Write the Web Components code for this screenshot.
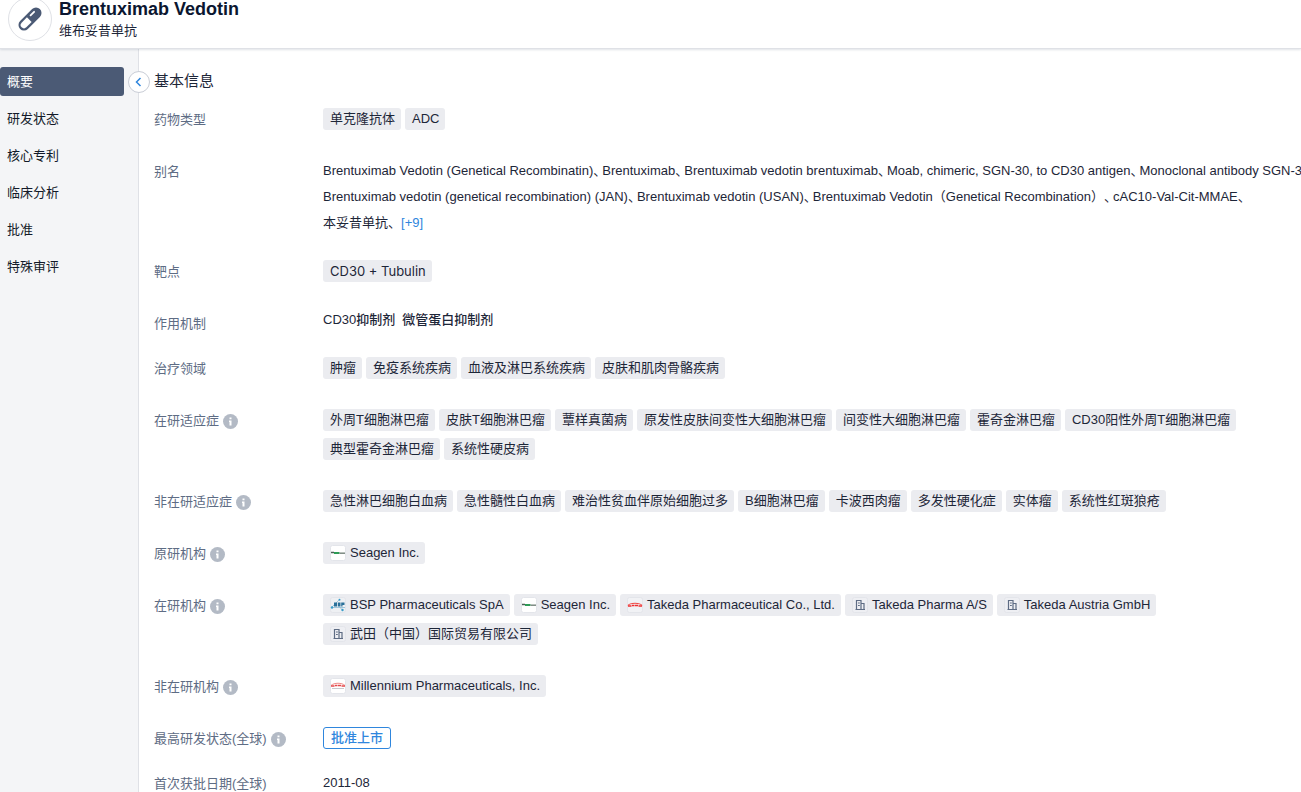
<!DOCTYPE html>
<html lang="zh-CN">
<head>
<meta charset="utf-8">
<title>Brentuximab Vedotin</title>
<style>
    body {
        margin: 0;
        height: 100vh;
        overflow: hidden;
        background: #fff;
        color: #1d2638;
        font: 13px/22px "Liberation Sans", "Noto Sans CJK SC", sans-serif;
        text-spacing-trim: space-all;
        --color-border: #dfe1e6;
        --color-tag: #ebecf0;
        --color-slate: #4b5a75;
        --color-label: #5e6c84;
        --color-primary: #2f86dd;
    }
</style>
</head>
<body>
<drug-page>
    <drug-header slot="header">
        Brentuximab Vedotin
        <span slot="subtitle">维布妥昔单抗</span>
    </drug-header>
    <side-nav slot="nav">
        <nav-item active>概要</nav-item>
        <nav-item>研发状态</nav-item>
        <nav-item>核心专利</nav-item>
        <nav-item>临床分析</nav-item>
        <nav-item>批准</nav-item>
        <nav-item>特殊审评</nav-item>
    </side-nav>
    <info-section heading="基本信息">
        <info-row label="药物类型">
            <info-tag>单克隆抗体</info-tag>
            <info-tag>ADC</info-tag>
        </info-row>
        <info-row label="别名">
            <alias-list>
                <alias-name>Brentuximab Vedotin (Genetical Recombinatin)、</alias-name>
                <alias-name>Brentuximab、</alias-name>
                <alias-name>Brentuximab vedotin brentuximab、</alias-name>
                <alias-name>Moab, chimeric, SGN-30, to CD30 antigen、</alias-name>
                <alias-name>Monoclonal antibody SGN-3</alias-name>
            </alias-list>
            <alias-list>
                <alias-name>Brentuximab vedotin (genetical recombination) (JAN)、</alias-name>
                <alias-name>Brentuximab vedotin (USAN)、</alias-name>
                <alias-name>Brentuximab Vedotin（Genetical Recombination）、</alias-name>
                <alias-name>cAC10-Val-Cit-MMAE、</alias-name>
            </alias-list>
            <alias-list more="[+9]">
                <alias-name>本妥昔单抗、</alias-name>
            </alias-list>
        </info-row>
        <info-row label="靶点">
            <info-tag strong>CD30 + Tubulin</info-tag>
        </info-row>
        <info-row label="作用机制" tight>
            <plain-value strong>CD30抑制剂</plain-value>
            <plain-value strong>微管蛋白抑制剂</plain-value>
        </info-row>
        <info-row label="治疗领域">
            <info-tag>肿瘤</info-tag>
            <info-tag>免疫系统疾病</info-tag>
            <info-tag>血液及淋巴系统疾病</info-tag>
            <info-tag>皮肤和肌肉骨骼疾病</info-tag>
        </info-row>
        <info-row label="在研适应症" hint>
            <info-tag>外周T细胞淋巴瘤</info-tag>
            <info-tag>皮肤T细胞淋巴瘤</info-tag>
            <info-tag>蕈样真菌病</info-tag>
            <info-tag>原发性皮肤间变性大细胞淋巴瘤</info-tag>
            <info-tag>间变性大细胞淋巴瘤</info-tag>
            <info-tag>霍奇金淋巴瘤</info-tag>
            <info-tag>CD30阳性外周T细胞淋巴瘤</info-tag>
            <info-tag>典型霍奇金淋巴瘤</info-tag>
            <info-tag>系统性硬皮病</info-tag>
        </info-row>
        <info-row label="非在研适应症" hint>
            <info-tag>急性淋巴细胞白血病</info-tag>
            <info-tag>急性髓性白血病</info-tag>
            <info-tag>难治性贫血伴原始细胞过多</info-tag>
            <info-tag>B细胞淋巴瘤</info-tag>
            <info-tag>卡波西肉瘤</info-tag>
            <info-tag>多发性硬化症</info-tag>
            <info-tag>实体瘤</info-tag>
            <info-tag>系统性红斑狼疮</info-tag>
        </info-row>
        <info-row label="原研机构" hint>
            <info-tag logo="seagen">Seagen Inc.</info-tag>
        </info-row>
        <info-row label="在研机构" hint>
            <info-tag logo="bsp">BSP Pharmaceuticals SpA</info-tag>
            <info-tag logo="seagen">Seagen Inc.</info-tag>
            <info-tag logo="takeda">Takeda Pharmaceutical Co., Ltd.</info-tag>
            <info-tag logo="building">Takeda Pharma A/S</info-tag>
            <info-tag logo="building">Takeda Austria GmbH</info-tag>
            <info-tag logo="building">武田（中国）国际贸易有限公司</info-tag>
        </info-row>
        <info-row label="非在研机构" hint>
            <info-tag logo="millennium">Millennium Pharmaceuticals, Inc.</info-tag>
        </info-row>
        <info-row label="最高研发状态(全球)" hint tight>
            <status-badge>批准上市</status-badge>
        </info-row>
        <info-row label="首次获批日期(全球)">
            <plain-value>2011-08</plain-value>
        </info-row>
    </info-section>
</drug-page>

<script>
const logos = {
    seagen: `
        <rect x=".5" y=".5" width="15" height="15" rx="2" fill="#fff" stroke="#e3e5ea"/>
        <path d="M1 7.500h3" stroke="#4a5f55" stroke-width="1.500"/>
        <path d="M4 8h5.500" stroke="#2e9c56" stroke-width="2"/>
        <path d="M9.500 8.200h5.500" stroke="#7c8a82" stroke-width="1.500"/>`,
    bsp: `
        <rect x=".5" y=".5" width="15" height="15" rx="2" fill="#eef0f3" stroke="#e3e5ea"/>
        <path d="M2 10L9 3M3 10.500h12M9.500 10l3 3" stroke="#8dbbd3" stroke-width=".8" fill="none"/>
        <path d="M4 5.500h3v4H4zM7.800 5.500h2.700v4H7.800zM11.200 5.500h3.300V8h-2v1.500h-1.300z" fill="#2b7099"/>
        <circle cx="2" cy="10.500" r="1.200" fill="#3a9cc9"/>
        <circle cx="9.500" cy="2.800" r="1" fill="#3a9cc9"/>
        <circle cx="12.500" cy="13" r="1.200" fill="#3a9cc9"/>`,
    takeda: `
        <rect x=".5" y=".5" width="15" height="15" rx="2" fill="#f1f2f5" stroke="#e3e5ea"/>
        <path d="M1 8.500C3 5.500 13 5.500 15 8.500" fill="none" stroke="#f04a47" stroke-width="1.200"/>
        <path d="M1 9h3.500M5 8.500h2.500M8 8.500h3M11.500 9H15" stroke="#ee2f30" stroke-width="1.600"/>`,
    millennium: `
        <rect x=".5" y=".5" width="15" height="15" rx="2" fill="#fff" stroke="#e3e5ea"/>
        <path d="M1 7.500C4 4.500 12 4.500 15 7.500" fill="none" stroke="#f08a88" stroke-width="1"/>
        <path d="M1 8h3.500M5 7.500h2.500M8 7.500h3M11.500 8H15" stroke="#e4484a" stroke-width="1.400"/>
        <path d="M2 10.500h12" stroke="#c9c9cd" stroke-width="1"/>`,
    building: `
        <rect x=".5" y=".5" width="15" height="15" rx="2" fill="#eeeff3" stroke="#e3e5ea"/>
        <path d="M4.500 12.500v-9h4.500v9M9 6.500h3v6M3.500 12.500H13" fill="none" stroke="#5e6c84" stroke-width="1.200"/>
        <path d="M6 6h1.800M6 8.500h1.800" stroke="#5e6c84"/>`
};

class BaseElement extends HTMLElement {
    constructor() {
        super();
        this.attachShadow({mode: 'open'});
    }

    connectedCallback() {
        this.shadowRoot.innerHTML = this.template();
    }
}

class DrugPage extends BaseElement {
    template() {
        return `
            <style>
                :host {
                    display: grid;
                    grid-template-columns: auto minmax(0, 1fr);
                    grid-template-rows: auto minmax(0, 1fr);
                    height: 100%;
                }
                header {
                    grid-column: 1 / -1;
                    z-index: 1;
                }
                main {
                    overflow: hidden;
                    padding: 21px 0 0 15px;
                }
            </style>
            <header><slot name="header"></slot></header>
            <slot name="nav"></slot>
            <main><slot></slot></main>
        `;
    }
}

class DrugHeader extends BaseElement {
    template() {
        return `
            <style>
                :host {
                    display: flex;
                    align-items: flex-end;
                    gap: 7px;
                    box-sizing: border-box;
                    height: 49px;
                    padding: 0 8px 7px;
                    background: #fff;
                    border-bottom: 1px solid var(--color-border);
                    box-shadow: 0 1px 2px rgba(9,30,66,0.12);
                }
                .avatar {
                    display: grid;
                    place-items: center;
                    box-sizing: border-box;
                    width: 44px;
                    height: 44px;
                    border: 1px solid var(--color-border);
                    border-radius: 50%;
                }
                h1 {
                    margin: 0;
                    color: #0b1630;
                    font-size: 18px;
                    line-height: 24px;
                }
                p {
                    margin: 0;
                    line-height: 20px;
                }
            </style>
            <div class="avatar">
                <svg width="24" height="24" viewBox="0 0 24 24" aria-hidden="true">
                    <g transform="rotate(45 12 12)">
                        <rect x="6.500" y="-2" width="11" height="28" rx="5.500" fill="#4b5a75"/>
                        <path d="M8.700 13h6.600v7.500a3.300 3.300 0 0 1-6.600 0z" fill="#fff"/>
                        <path d="M9.800 4v5" stroke="#fff" stroke-width="1.800" stroke-linecap="round"/>
                    </g>
                </svg>
            </div>
            <div>
                <h1><slot></slot></h1>
                <p><slot name="subtitle"></slot></p>
            </div>
        `;
    }
}

class SideNav extends BaseElement {
    template() {
        return `
            <style>
                :host {
                    position: relative;
                    box-sizing: border-box;
                    width: 139px;
                    padding: 18px 14px 0 0;
                    background: #f4f5f7;
                    border-right: 1px solid var(--color-border);
                }
                nav {
                    display: flex;
                    flex-direction: column;
                    gap: 8px;
                }
                button {
                    position: absolute;
                    top: 22px;
                    right: -12px;
                    display: grid;
                    place-items: center;
                    box-sizing: border-box;
                    width: 22px;
                    height: 22px;
                    padding: 0;
                    background: #fff;
                    border: 1px solid #c9cdd6;
                    border-radius: 50%;
                }
            </style>
            <nav><slot></slot></nav>
            <button type="button" aria-label="收起">
                <svg width="10" height="10" viewBox="0 0 10 10" fill="none" stroke="#2f86dd" stroke-width="1.500">
                    <path d="M6.500 1L2.500 5l4 4"/>
                </svg>
            </button>
        `;
    }
}

class NavItem extends BaseElement {
    template() {
        return `
            <style>
                :host {
                    display: block;
                }
                a {
                    display: block;
                    padding: 0 7px;
                    border-radius: 3px;
                    color: #131a29;
                    line-height: 29px;
                    text-decoration: none;
                }
                :host([active]) a {
                    background: var(--color-slate);
                    color: #fff;
                }
            </style>
            <a href="#"><slot></slot></a>
        `;
    }
}

class InfoSection extends BaseElement {
    template() {
        return `
            <style>
                :host {
                    display: block;
                }
                h2 {
                    margin: 0 0 16px;
                    font-size: 15px;
                    font-weight: normal;
                    line-height: 22px;
                }
            </style>
            <h2>${this.getAttribute('heading')}</h2>
            <slot></slot>
        `;
    }
}

class InfoRow extends BaseElement {
    template() {
        const hint = this.hasAttribute('hint') ? `
            <svg width="15" height="15" viewBox="0 0 15 15" aria-hidden="true">
                <circle cx="7.500" cy="7.500" r="7.500" fill="#b3bac5"/>
                <path d="M6.500 3.500h2v1.800h-2zM6 6.500h2.500v5h-2v-3.500h-.5z" fill="#fff"/>
            </svg>` : '';
        return `
            <style>
                :host {
                    display: grid;
                    grid-template-columns: 169px minmax(0, 1fr);
                    margin-bottom: 30px;
                }
                :host([tight]) {
                    height: 22px;
                    margin-bottom: 23px;
                }
                .label {
                    display: flex;
                    align-items: center;
                    gap: 4px;
                    height: 24px;
                    margin-bottom: -2px;
                    color: var(--color-label);
                }
                .value {
                    display: flex;
                    flex-wrap: wrap;
                    align-items: flex-start;
                    gap: 7px 4px;
                }
            </style>
            <div class="label">${this.getAttribute('label')}${hint}</div>
            <div class="value"><slot></slot></div>
        `;
    }
}

class InfoTag extends BaseElement {
    template() {
        const logo = logos[this.getAttribute('logo')];
        const icon = logo ? `<svg width="16" height="16" viewBox="0 0 16 16" aria-hidden="true">${logo}</svg>` : '';
        return `
            <style>
                :host {
                    display: flex;
                    align-items: center;
                    gap: 4px;
                    height: 22px;
                    padding: 0 6px 0 7px;
                    background: var(--color-tag);
                    border-radius: 3px;
                    line-height: 20px;
                    white-space: nowrap;
                }
                :host([strong]) {
                    font-family: Inter, "Noto Sans CJK SC", sans-serif;
                }
            </style>
            ${icon}<span><slot></slot></span>
        `;
    }
}

class AliasList extends BaseElement {
    template() {
        const more = this.hasAttribute('more') ? `<button type="button">${this.getAttribute('more')}</button>` : '';
        return `
            <style>
                :host {
                    display: flex;
                    flex-basis: 100%;
                    height: 19px;
                    line-height: 22px;
                    white-space: nowrap;
                }
                :host([more]) {
                    height: 18px;
                }
                ::slotted(:not(:last-child)) {
                    margin-right: -4px;
                }
                button {
                    height: 22px;
                    padding: 0;
                    background: none;
                    border: 0;
                    color: var(--color-primary);
                    font: inherit;
                }
            </style>
            <slot></slot>${more}
        `;
    }
}

class AliasName extends BaseElement {
    template() {
        return `
            <style>
                :host {
                    display: block;
                    flex: none;
                }
            </style>
            <slot></slot>
        `;
    }
}

class PlainValue extends BaseElement {
    template() {
        return `
            <style>
                :host {
                    display: block;
                    margin-right: 3px;
                }
                :host([strong]) {
                    font-weight: 500;
                    line-height: 16px;
                }
            </style>
            <slot></slot>
        `;
    }
}

class StatusBadge extends BaseElement {
    template() {
        return `
            <style>
                :host {
                    display: block;
                    padding: 0 7px;
                    border: 1px solid var(--color-primary);
                    border-radius: 3px;
                    color: var(--color-primary);
                    font-weight: 500;
                    line-height: 20px;
                }
            </style>
            <slot></slot>
        `;
    }
}

customElements.define('drug-page', DrugPage);
customElements.define('drug-header', DrugHeader);
customElements.define('side-nav', SideNav);
customElements.define('nav-item', NavItem);
customElements.define('info-section', InfoSection);
customElements.define('info-row', InfoRow);
customElements.define('info-tag', InfoTag);
customElements.define('alias-list', AliasList);
customElements.define('alias-name', AliasName);
customElements.define('plain-value', PlainValue);
customElements.define('status-badge', StatusBadge);
</script>
</body>
</html>
